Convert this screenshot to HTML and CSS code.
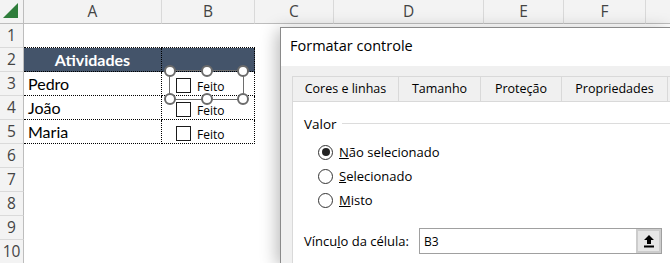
FILE: index.html
```html
<!DOCTYPE html>
<html lang="pt">
<head>
<meta charset="utf-8">
<title>Formatar controle</title>
<link rel="stylesheet" href="styles.css">
</head>
<body>
<div class="sheet">
  <div class="corner"><svg width="24" height="24" viewBox="0 0 24 24"><polygon points="4,19 19,19 19,4" fill="#2f7d3b"/></svg></div>
  <div class="colh">A</div>
  <div class="colh">B</div>
  <div class="colh">C</div>
  <div class="colh">D</div>
  <div class="colh">E</div>
  <div class="colh">F</div>
  <div class="colh last"></div>

  <div class="rowh">1</div>
  <div class="cell top"></div><div class="cell top"></div><div class="cell"></div><div class="cell"></div><div class="cell"></div><div class="cell"></div><div class="cell"></div>

  <div class="rowh">2</div>
  <div class="cell box head">Atividades</div><div class="cell box head"></div><div class="cell"></div><div class="cell"></div><div class="cell"></div><div class="cell"></div><div class="cell"></div>

  <div class="rowh">3</div>
  <div class="cell box name">Pedro</div><div class="cell box chk"><span class="cb"></span><span class="feito">Feito</span></div><div class="cell"></div><div class="cell"></div><div class="cell"></div><div class="cell"></div><div class="cell"></div>

  <div class="rowh">4</div>
  <div class="cell box name">João</div><div class="cell box chk"><span class="cb"></span><span class="feito">Feito</span></div><div class="cell"></div><div class="cell"></div><div class="cell"></div><div class="cell"></div><div class="cell"></div>

  <div class="rowh">5</div>
  <div class="cell box name">Maria</div><div class="cell box chk"><span class="cb"></span><span class="feito">Feito</span></div><div class="cell"></div><div class="cell"></div><div class="cell"></div><div class="cell"></div><div class="cell"></div>

  <div class="rowh">6</div>
  <div class="cell"></div><div class="cell"></div><div class="cell"></div><div class="cell"></div><div class="cell"></div><div class="cell"></div><div class="cell"></div>
  <div class="rowh">7</div>
  <div class="cell"></div><div class="cell"></div><div class="cell"></div><div class="cell"></div><div class="cell"></div><div class="cell"></div><div class="cell"></div>
  <div class="rowh">8</div>
  <div class="cell"></div><div class="cell"></div><div class="cell"></div><div class="cell"></div><div class="cell"></div><div class="cell"></div><div class="cell"></div>
  <div class="rowh">9</div>
  <div class="cell"></div><div class="cell"></div><div class="cell"></div><div class="cell"></div><div class="cell"></div><div class="cell"></div><div class="cell"></div>
  <div class="rowh last">10</div>
  <div class="cell"></div><div class="cell"></div><div class="cell"></div><div class="cell"></div><div class="cell"></div><div class="cell"></div><div class="cell"></div>
</div>

<div class="selection">
  <span class="hd tl"></span><span class="hd tm"></span><span class="hd tr"></span>
  <span class="hd bl"></span><span class="hd bm"></span><span class="hd br"></span>
</div>

<div class="dialog">
  <div class="titlebar">Formatar controle</div>
  <div class="body">
    <div class="tabs">
      <div class="tab t1">Cores e linhas</div>
      <div class="tab t2">Tamanho</div>
      <div class="tab t3">Proteção</div>
      <div class="tab t4">Propriedades</div>
      <div class="tab t5"></div>
    </div>
    <div class="panel">
      <div class="group">
        <span class="glabel">Valor</span><span class="gline"></span>
      </div>
      <div class="radios">
        <div class="radio"><span class="rc on"></span><span class="rl"><u>N</u>ão selecionado</span></div>
        <div class="radio"><span class="rc"></span><span class="rl"><u>S</u>elecionado</span></div>
        <div class="radio"><span class="rc"></span><span class="rl"><u>M</u>isto</span></div>
      </div>
      <div class="link">
        <span class="llabel">Víncu<u>l</u>o da célula:</span>
        <div class="input"><span class="ival">B3</span>
          <span class="btn"><svg width="12" height="14" viewBox="0 0 12 14"><polygon points="6,1 11,6 8,6 8,10 4,10 4,6 1,6" fill="#000"/><rect x="1" y="11.5" width="10" height="2" fill="#000"/></svg></span>
        </div>
      </div>
    </div>
  </div>
</div>
</body>
</html>
```

FILE: styles.css
```css
* { box-sizing: border-box; }
html, body { margin: 0; padding: 0; }
body {
  width: 670px;
  height: 263px;
  overflow: hidden;
  background: #fff;
  font-family: "Open Sans", "Noto Sans", sans-serif;
  position: relative;
}

.sheet {
  display: grid;
  grid-template-columns: 24px 138px 93px 79px 150px 80px 82px 24px;
  grid-template-rows: 24px repeat(9, 24px) 23px;
  width: 670px;
  height: 263px;
  overflow: hidden;
}

.corner {
  background: #f3f3f3;
  border-right: 1px solid #bdbdbd;
  border-bottom: 1px solid #bdbdbd;
}
.corner svg { display: block; margin: -1px 0 0 -1px; }

.colh {
  background: #f3f3f3;
  border-right: 1px solid #d9d9d9;
  border-bottom: 1px solid #bdbdbd;
  color: #444;
  font-size: 15.5px;
  text-align: center;
  line-height: 23px;
}
.colh.last { border-right: none; }

.rowh {
  background: #f3f3f3;
  border-right: 1px solid #bdbdbd;
  border-bottom: 1px solid #dadada;
  color: #444;
  font-size: 15.5px;
  text-align: center;
  line-height: 23px;
}
.rowh.last { border-bottom: none; }

.cell {
  font-family: "Lato", "Liberation Sans", sans-serif;
  font-size: 16px;
  color: #000;
  line-height: 23px;
  white-space: nowrap;
  overflow: hidden;
}
.cell.top { border-bottom: 1px dotted #000; }
.cell.box {
  border-right: 1px dotted #000;
  border-bottom: 1px dotted #000;
}
.cell.head {
  background: #44546a;
  color: #fff;
  font-weight: bold;
  text-align: center;
}
.cell.name { padding-left: 4px; }
.cell.chk {
  display: flex;
  align-items: flex-start;
  padding-left: 14px;
  padding-top: 6px;
}
.cb {
  width: 15px;
  height: 15px;
  border: 1px solid #1a1a1a;
  background: #fff;
  flex: none;
}
.feito {
  font-family: "Open Sans", "Noto Sans", sans-serif;
  font-size: 12px;
  line-height: 16px;
  margin-left: 6px;
  margin-top: 1px;
  color: #000;
}

/* selection frame around the checkbox of B3 */
.selection {
  position: absolute;
  left: 169px;
  top: 70px;
  width: 75px;
  height: 30px;
  border: 1px solid #6e6e6e;
}
.hd {
  position: absolute;
  width: 12px;
  height: 12px;
  border-radius: 50%;
  background: #fff;
  border: 2.5px solid #6b6b6b;
}
.hd.tl { left: -6px; top: -6px; }
.hd.tm { left: 31px; top: -6px; }
.hd.tr { right: -6px; top: -6px; }
.hd.bl { left: -6px; bottom: -6px; }
.hd.bm { left: 31px; bottom: -6px; }
.hd.br { right: -6px; bottom: -6px; }

/* dialog */
.dialog {
  position: absolute;
  left: 280px;
  top: 27px;
  width: 390px;
  height: 236px;
  border-left: 1px solid #8a8a8a;
  border-top: 1px solid #8a8a8a;
  background: #f0f0f0;
  box-shadow: -3px 3px 16px rgba(0, 0, 0, 0.28);
  display: flex;
  flex-direction: column;
  overflow: hidden;
}
.titlebar {
  height: 38px;
  flex: none;
  background: #fff;
  font-size: 14.5px;
  color: #000;
  padding-left: 9px;
  line-height: 36px;
}
.body {
  flex: 1;
  padding: 10px 0 0 11px;
  display: flex;
  flex-direction: column;
  min-width: 0;
}
.tabs {
  display: flex;
  height: 26px;
  flex: none;
}
.tab {
  flex: none;
  border: 1px solid #d9d9d9;
  margin-right: -1px;
  font-size: 12.5px;
  color: #000;
  text-align: center;
  line-height: 24px;
  background: #f0f0f0;
  white-space: nowrap;
}
.t1 { width: 107px; }
.t2 { width: 83px; }
.t3 { width: 82px; }
.t4 { width: 107px; }
.t5 { width: 60px; }

.panel {
  flex: 1;
  margin-top: -1px;
  background: #fff;
  border: 1px solid #d9d9d9;
  border-right: none;
  border-bottom: none;
  padding: 12px 0 0 11px;
}
.group {
  display: flex;
  align-items: center;
  height: 19px;
}
.glabel { font-size: 13.5px; color: #000; }
.gline {
  flex: 1;
  border-top: 1px solid #dcdcdc;
  margin-left: 5px;
}
.radios {
  padding-left: 14px;
  margin-top: 7px;
  display: flex;
  flex-direction: column;
}
.radio {
  display: flex;
  align-items: center;
  height: 24px;
}
.rc {
  width: 15px;
  height: 15px;
  border-radius: 50%;
  border: 1px solid #333;
  background: #fff;
  flex: none;
  position: relative;
}
.rc.on::after {
  content: "";
  position: absolute;
  left: 2.5px;
  top: 2.5px;
  width: 8px;
  height: 8px;
  border-radius: 50%;
  background: #222;
}
.rl {
  font-size: 13px;
  margin-left: 6px;
  color: #000;
}
.link {
  display: flex;
  align-items: center;
  margin-top: 16px;
}
.llabel {
  font-size: 13px;
  color: #000;
  width: 115px;
  flex: none;
}
.input {
  width: 243px;
  height: 26px;
  flex: none;
  border: 1px solid #a0a0a0;
  background: #fff;
  display: flex;
  align-items: center;
  justify-content: space-between;
  padding-left: 4px;
}
.ival { font-size: 12px; color: #000; }
.btn {
  width: 25px;
  height: 24px;
  background: #e6e6e6;
  border: 2px solid #cccccc;
  display: flex;
  align-items: center;
  justify-content: center;
}
.btn svg { display: block; }
```
